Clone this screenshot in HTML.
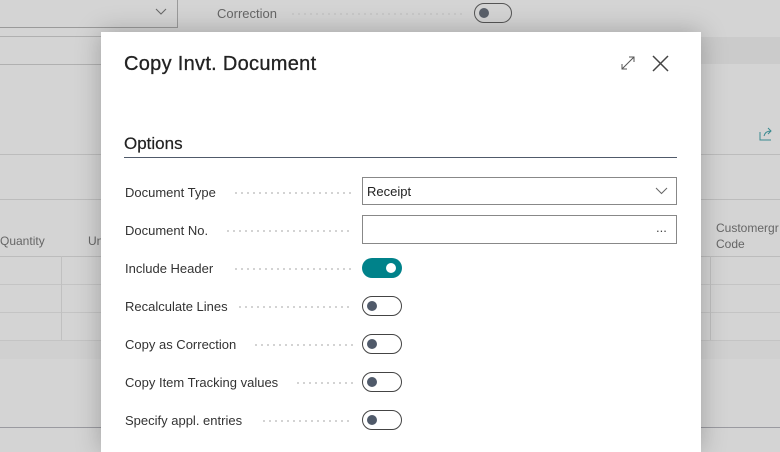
<!DOCTYPE html>
<html><head><style>
body{margin:0;width:780px;height:440px;overflow:hidden;background:#d4d4d4;font-family:"Liberation Sans",sans-serif;position:relative}
.a{position:absolute}
.lbl{position:absolute;left:24px;font-size:13px;color:#333;}
.dots{position:absolute;height:2px;background:radial-gradient(circle,#c4c4c4 0.8px,transparent 1px) 0 0/6px 2px repeat-x}
.tg{position:absolute;left:261px;width:38px;height:18px;border:1px solid #444;border-radius:10px;background:#fff}
.tg:after{content:"";position:absolute;left:4px;top:4px;width:10px;height:10px;border-radius:50%;background:#505a6a}
</style></head><body>
<div class="a" style="left:-1px;top:-1px;width:177px;height:27px;border:1px solid #9a9a9a"></div>
<svg class="a" style="left:155px;top:8px" width="12" height="8"><path d="M1 1l5 5 5-5" stroke="#666" fill="none"/></svg>
<div class="a" style="left:217px;top:6px;font-size:13px;color:#666">Correction</div>
<div class="dots" style="left:290px;top:13px;width:176px"></div>
<div class="a" style="left:474px;top:3px;width:36px;height:18px;border:1px solid #555;border-radius:10px"><div class="a" style="left:4px;top:4px;width:10px;height:10px;border-radius:50%;background:#5a606a"></div></div>
<div class="a" style="left:0;top:36px;width:101px;height:1px;background:#b0b0b0"></div>
<div class="a" style="left:0;top:64px;width:101px;height:1px;background:#b0b0b0"></div>
<div class="a" style="left:701px;top:37px;width:79px;height:27px;background:#cbcbcb"></div>
<div class="a" style="left:0;top:154px;width:780px;height:1px;background:#bcbcbc"></div>
<div class="a" style="left:0;top:199px;width:780px;height:1px;background:#bcbcbc"></div>
<div class="a" style="left:0;top:234px;font-size:12px;color:#666">Quantity</div>
<div class="a" style="left:88px;top:234px;font-size:12px;color:#666">Un</div>
<div class="a" style="left:716px;top:220px;font-size:12px;color:#666;line-height:16px">Customergr<br>Code</div>
<div class="a" style="left:0;top:256px;width:780px;height:1px;background:#bcbcbc"></div>
<div class="a" style="left:0;top:284px;width:780px;height:1px;background:#c4c4c4"></div>
<div class="a" style="left:0;top:312px;width:780px;height:1px;background:#c4c4c4"></div>
<div class="a" style="left:0;top:340px;width:780px;height:1px;background:#c4c4c4"></div>
<div class="a" style="left:0;top:341px;width:780px;height:18px;background:#d0d0d0"></div>
<div class="a" style="left:61px;top:256px;width:1px;height:84px;background:#c0c0c0"></div>
<div class="a" style="left:710px;top:256px;width:1px;height:84px;background:#c0c0c0"></div>
<div class="a" style="left:0;top:427px;width:780px;height:1px;background:#9a9aa0"></div>
<svg class="a" style="left:758px;top:126px" width="16" height="16"><path d="M2 6v8h11M6 10c1-4 4-5 7-5M10 2l3 3-3 3" stroke="#3a8a90" fill="none"/></svg>
<div class="a" style="left:101px;top:32px;width:600px;height:420px;background:#fff;box-shadow:0 0 24px rgba(0,0,0,.25)">
<div class="a" style="left:23px;top:21px;font-size:20px;color:#222;letter-spacing:0.3px;-webkit-text-stroke:0.3px #222">Copy Invt. Document</div>
<svg class="a" style="left:518px;top:22px" width="18" height="18"><path d="M3 15L15 3M10 3h5v5M3 10v5h5" stroke="#555" fill="none"/></svg>
<svg class="a" style="left:550px;top:22px" width="18" height="18"><path d="M2 2l15 15M17 2L2 17" stroke="#444" stroke-width="1.5" fill="none"/></svg>
<div class="a" style="left:23px;top:102px;font-size:17px;color:#222;-webkit-text-stroke:0.2px #222">Options</div>
<div class="a" style="left:23px;top:125px;width:553px;height:1px;background:#505a6a"></div>
<div class="lbl" style="top:153px">Document Type</div><div class="dots" style="left:132px;top:160px;width:120px"></div>
<div class="a" style="left:261px;top:145px;width:313px;height:26px;border:1px solid #888"><span class="a" style="left:4px;top:6px;font-size:13px;color:#222">Receipt</span>
<svg class="a" style="left:292px;top:9px" width="13" height="8"><path d="M1 1l5.5 5.5L12 1" stroke="#666" fill="none"/></svg></div>
<div class="lbl" style="top:191px">Document No.</div><div class="dots" style="left:124px;top:198px;width:128px"></div>
<div class="a" style="left:261px;top:183px;width:313px;height:27px;border:1px solid #888"><span class="a" style="left:293px;top:4px;font-size:13px;color:#444">...</span></div>
<div class="lbl" style="top:229px">Include Header</div><div class="dots" style="left:132px;top:236px;width:120px"></div>
<div class="a" style="left:261px;top:226px;width:40px;height:20px;border-radius:10px;background:#00828a"><div class="a" style="left:24px;top:5px;width:10px;height:10px;border-radius:50%;background:#fff"></div></div>
<div class="lbl" style="top:267px">Recalculate Lines</div><div class="dots" style="left:136px;top:274px;width:116px"></div>
<div class="tg" style="top:264px"></div>
<div class="lbl" style="top:305px">Copy as Correction</div><div class="dots" style="left:152px;top:312px;width:100px"></div>
<div class="tg" style="top:302px"></div>
<div class="lbl" style="top:343px">Copy Item Tracking values</div><div class="dots" style="left:194px;top:350px;width:58px"></div>
<div class="tg" style="top:340px"></div>
<div class="lbl" style="top:381px">Specify appl. entries</div><div class="dots" style="left:160px;top:388px;width:92px"></div>
<div class="tg" style="top:378px"></div>
</div>
</body></html>
